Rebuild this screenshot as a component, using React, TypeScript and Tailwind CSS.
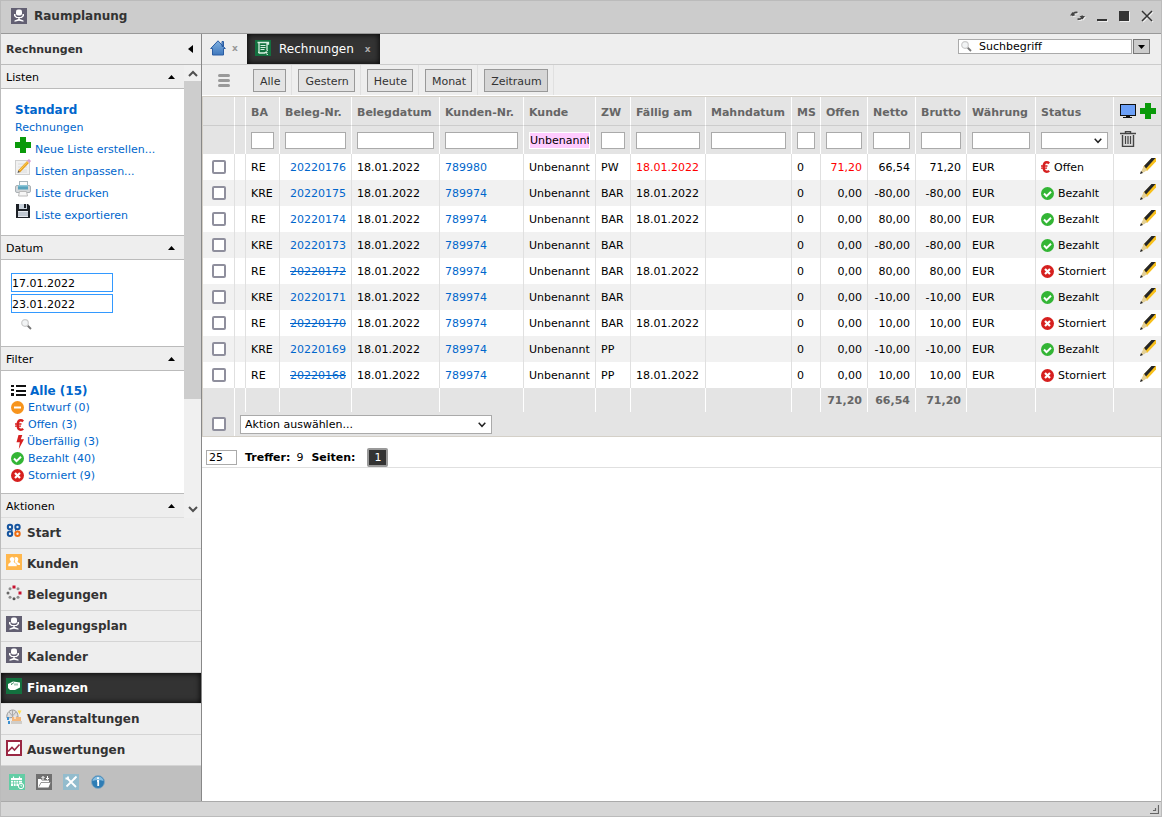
import React, { useState } from 'react';

type Status = 'offen' | 'bezahlt' | 'storniert';

interface Invoice {
  ba: string;
  nr: string;
  kunde: string;
  zw: string;
  due: string;
  open: string;
  net: string;
  gross: string;
  status: Status;
  overdue?: boolean;
}

const DATE = '18.01.2022';

const INVOICES: Invoice[] = [
  { ba: 'RE', nr: '20220176', kunde: '789980', zw: 'PW', due: DATE, open: '71,20', net: '66,54', gross: '71,20', status: 'offen', overdue: true },
  { ba: 'KRE', nr: '20220175', kunde: '789974', zw: 'BAR', due: DATE, open: '0,00', net: '-80,00', gross: '-80,00', status: 'bezahlt' },
  { ba: 'RE', nr: '20220174', kunde: '789974', zw: 'BAR', due: DATE, open: '0,00', net: '80,00', gross: '80,00', status: 'bezahlt' },
  { ba: 'KRE', nr: '20220173', kunde: '789974', zw: 'BAR', due: '', open: '0,00', net: '-80,00', gross: '-80,00', status: 'bezahlt' },
  { ba: 'RE', nr: '20220172', kunde: '789974', zw: 'BAR', due: DATE, open: '0,00', net: '80,00', gross: '80,00', status: 'storniert' },
  { ba: 'KRE', nr: '20220171', kunde: '789974', zw: 'BAR', due: '', open: '0,00', net: '-10,00', gross: '-10,00', status: 'bezahlt' },
  { ba: 'RE', nr: '20220170', kunde: '789974', zw: 'BAR', due: DATE, open: '0,00', net: '10,00', gross: '10,00', status: 'storniert' },
  { ba: 'KRE', nr: '20220169', kunde: '789974', zw: 'PP', due: '', open: '0,00', net: '-10,00', gross: '-10,00', status: 'bezahlt' },
  { ba: 'RE', nr: '20220168', kunde: '789974', zw: 'PP', due: DATE, open: '0,00', net: '10,00', gross: '10,00', status: 'storniert' },
];

const COLUMNS = [
  { label: 'BA', width: 'w-[34px]' },
  { label: 'Beleg-Nr.', width: 'w-[72px]' },
  { label: 'Belegdatum', width: 'w-[88px]' },
  { label: 'Kunden-Nr.', width: 'w-[84px]' },
  { label: 'Kunde', width: 'w-[72px]' },
  { label: 'ZW', width: 'w-[35px]' },
  { label: 'Fällig am', width: 'w-[75px]' },
  { label: 'Mahndatum', width: 'w-[86px]' },
  { label: 'MS', width: 'w-[29px]' },
  { label: 'Offen', width: 'w-[47px]' },
  { label: 'Netto', width: 'w-[48px]' },
  { label: 'Brutto', width: 'w-[51px]' },
  { label: 'Währung', width: 'w-[69px]' },
  { label: 'Status', width: 'w-[78px]' },
];

const TOTALS: Record<string, string> = { Offen: '71,20', Netto: '66,54', Brutto: '71,20' };

/* ---------- icons ---------- */

function ChairIcon() {
  return (
    <svg width="16" height="16" viewBox="0 0 16 16">
      <rect width="16" height="16" fill="#625f72" />
      <rect x="5" y="1.500" width="6" height="6" rx="2" fill="#fff" />
      <path d="M3 6h1.500v1.500L6 9h4l1.500-1.500V6H13v2l-2.200 2H5.200L3 8z" fill="#fff" />
      <path d="M7.300 9h1.400v2l3.800 1.500v1.300L8 12.800l-4.500 1V12.500L7.300 11z" fill="#fff" />
    </svg>
  );
}

function PlusIcon() {
  return (
    <svg width="16" height="16" viewBox="0 0 16 16" className="inline-block">
      <path d="M5 0h6v5h5v6h-5v5H5v-5H0V5h5z" fill="#0a9a0a" />
    </svg>
  );
}

function NoteIcon() {
  return (
    <svg width="16" height="16" viewBox="0 0 16 16" className="inline-block">
      <rect x=".5" y="1.5" width="14" height="14" fill="#f1f1f1" stroke="#cfcfcf" />
      <path d="M3 5h7M3 8h9M3 11h9M3 13h9" stroke="#dcdcdc" />
      <path d="M4 12.500 13 3" stroke="#e8a020" strokeWidth="2.600" />
      <path d="M4.500 11.500 12.500 3" stroke="#ffd45c" strokeWidth="1" />
      <path d="m12 1.500 2-1.500 2 2-1.500 2z" fill="#d9a0d0" />
      <path d="m2.500 14 .8-2.500 1.700 1.500z" fill="#555" />
    </svg>
  );
}

function PrinterIcon() {
  return (
    <svg width="16" height="16" viewBox="0 0 16 16" className="inline-block">
      <rect x="4.500" y=".5" width="8" height="5" fill="#fafafa" stroke="#a8b4bb" />
      <rect x=".5" y="4.500" width="15" height="7" rx="1.500" fill="#d5d8da" stroke="#aab0b4" />
      <rect x="3" y="4" width="10" height="4.500" fill="#58a3bd" />
      <rect x="3" y="4" width="10" height="1.500" fill="#8cc6d8" />
      <path d="M4.500 10.500h7l1 4.500h-9z" fill="#f6f6f6" stroke="#bbb" />
    </svg>
  );
}

function DiskIcon() {
  return (
    <svg width="16" height="16" viewBox="0 0 16 16" className="inline-block">
      <path d="M1 1h12l2 2v12H1z" fill="#1c2026" />
      <rect x="4" y="1" width="8" height="5" fill="#c9d2dc" />
      <rect x="9" y="1" width="2" height="4" fill="#1c2026" />
      <rect x="3" y="8" width="10" height="6" fill="#e6e9ee" />
      <path d="M3 10h10M3 12h10" stroke="#9aa6b4" />
    </svg>
  );
}

function SearchIcon() {
  return (
    <svg width="11" height="11" viewBox="0 0 11 11">
      <path d="m6.500 6.500 3.500 3.500" stroke="#777" strokeWidth="1.800" />
      <circle cx="4" cy="4" r="3.300" fill="#f2f4f5" stroke="#ccc" strokeWidth="1.200" />
    </svg>
  );
}

function ListIcon() {
  return (
    <svg width="15" height="13" viewBox="0 0 15 13" shapeRendering="crispEdges">
      <path d="M0 1h3v2H0zM0 5h3v2H0zM0 9h3v3H0zM5 1h10v2H5zM5 6h10v2H5zM5 10h10v2H5z" fill="#111" />
    </svg>
  );
}

function DraftIcon() {
  return (
    <svg width="13" height="13" viewBox="0 0 13 13">
      <circle cx="6.500" cy="6.500" r="6.500" fill="#f7941d" />
      <rect x="3" y="5.500" width="7" height="2" fill="#fff" />
    </svg>
  );
}

function EuroIcon() {
  return (
    <svg width="9" height="12" viewBox="0 0 9 12">
      <path d="M8.200 2.300C7.300 1.400 6.500 1.300 5.800 1.300 3.500 1.300 2.700 3.500 2.700 6s.8 4.700 3.100 4.700c.7 0 1.600-.1 2.400-1" fill="none" stroke="#d62020" strokeWidth="2.400" />
      <path d="M0 5h6.500M0 7.200h6" stroke="#d62020" strokeWidth="1.300" />
    </svg>
  );
}

function BoltIcon() {
  return (
    <svg width="9" height="14" viewBox="0 0 9 14">
      <path d="M3.500 0h3.800L5.800 4.200H9L3.800 14l1-6.800H1.500z" fill="#d62020" />
    </svg>
  );
}

function CheckIcon() {
  return (
    <svg width="13" height="13" viewBox="0 0 13 13">
      <circle cx="6.500" cy="6.500" r="6.500" fill="#33b535" />
      <path d="m3 6.500 2.500 2.600L10 4.700" fill="none" stroke="#fff" strokeWidth="2" />
    </svg>
  );
}

function CancelIcon() {
  return (
    <svg width="13" height="13" viewBox="0 0 13 13">
      <circle cx="6.500" cy="6.500" r="6.500" fill="#d6201f" />
      <path d="m4 4 5 5M9 4 4 9" stroke="#fff" strokeWidth="2.200" />
    </svg>
  );
}

function PencilIcon() {
  return (
    <svg width="16" height="16" viewBox="0 0 16 16" className="inline-block">
      <path d="M12 0h4v3.500L7 13l-4-4z" fill="#f8c01c" />
      <path d="M11.500 0H15.500L6 10.500 4 8z" fill="#23252a" />
      <path d="M4 8 2 11.500.5 15.500l4-1.600L7 12z" fill="#e3cf96" />
      <path d="m0 16 1-3 2 2z" fill="#222" />
    </svg>
  );
}

function MonitorIcon() {
  return (
    <svg width="16" height="15" viewBox="0 0 16 15" shapeRendering="crispEdges">
      <rect width="16" height="12" fill="#111" />
      <rect x="1" y="1" width="14" height="10" fill="#6ca0f8" />
      <path d="M6 12h4v1h2v1H3v-1h3z" fill="#111" />
    </svg>
  );
}

function TrashIcon() {
  return (
    <svg width="16" height="16" viewBox="0 0 16 16">
      <path d="M0 2.500h16M5.500 2V.5h5V2" stroke="#444" strokeWidth="1.400" fill="none" />
      <path d="M2.500 4v11.500h11V4" stroke="#444" strokeWidth="1.400" fill="#ddd" />
      <path d="M5.500 5v8M8 5v8M10.500 5v8" stroke="#444" strokeWidth="1.200" />
    </svg>
  );
}

function HomeIcon() {
  return (
    <svg width="16" height="16" viewBox="0 0 16 16">
      <defs>
        <linearGradient id="roof" x1="0" y1="0" x2="0" y2="1">
          <stop offset="0" stopColor="#7fb0e0" />
          <stop offset="1" stopColor="#3f78bd" />
        </linearGradient>
      </defs>
      <path d="M8 .8 15.300 8.500H13.500v6.500h-11V8.500H.7zM12 1.500h1.500v5H12z" fill="url(#roof)" stroke="#2b5da3" />
    </svg>
  );
}

function InvoiceIcon() {
  return (
    <svg width="16" height="16" viewBox="0 0 16 16">
      <rect width="16" height="16" fill="#13713f" />
      <path d="M2.500 2.500h11v1.500h-1.500v6M4 3v9.500h-1M4 13h6" fill="none" stroke="#d8eee0" strokeWidth="1.300" />
      <path d="M5.500 5.500h5M5.500 7.500h5M5.500 9.500h4" stroke="#d8eee0" />
      <path d="M13 10.500c-3 0-3 4 0 4M9.500 12.500h3" stroke="#d8eee0" fill="none" />
    </svg>
  );
}

function StartIcon() {
  return (
    <svg width="16" height="16" viewBox="0 0 16 16" fill="none" strokeWidth="2">
      <circle cx="4" cy="4" r="2.200" stroke="#15549f" />
      <circle cx="11.500" cy="4" r="2.200" stroke="#15549f" />
      <circle cx="4" cy="10.800" r="2.200" stroke="#15549f" />
      <circle cx="11.500" cy="10.800" r="2.200" stroke="#ee6c10" />
      <path d="M5.500 7h.500M9 7h1M5.800 8.500v-2" stroke="#15549f" strokeWidth="1.500" />
    </svg>
  );
}

function PeopleIcon() {
  return (
    <svg width="16" height="16" viewBox="0 0 16 16">
      <rect width="16" height="16" fill="#ffb74d" />
      <path d="M8.500 3.500C10 2.200 12.500 3 12.300 5.500L11.500 8l2.500 1.500V11H9z" fill="#fff" />
      <path d="M3.500 5.500C3.500 1.800 8.800 1.800 8.800 5.500L8 8l3 2v2.500H2V10l2.500-2z" fill="#fff" stroke="#ffb74d" strokeWidth=".6" />
    </svg>
  );
}

function RingIcon() {
  return (
    <svg width="16" height="16" viewBox="0 0 16 16" fill="#8d8d8d">
      <rect x="6.500" y="0.500" width="3" height="3" fill="#c8102e" />
      <rect x="12.500" y="6.500" width="3" height="3" fill="#c8102e" />
      <circle cx="12" cy="3.800" r="1.500" />
      <circle cx="12" cy="12.200" r="1.500" />
      <circle cx="8" cy="13.800" r="1.500" fill="#555" />
      <circle cx="4" cy="12.200" r="1.500" />
      <circle cx="2" cy="8" r="1.500" fill="#666" />
      <circle cx="4" cy="3.800" r="1.500" />
    </svg>
  );
}

function MoneyIcon() {
  return (
    <svg width="16" height="16" viewBox="0 0 16 16">
      <rect width="16" height="16" fill="#13713f" />
      <path d="m2 6 5-2.500 7 1v5L9 12H4L2 10z" fill="#fff" />
      <path d="M5.500 5.500v1.500M9 5.500v2M6 6l2-1.500M11 5.500v2" stroke="#4f9470" strokeWidth="1" />
    </svg>
  );
}

function EventIcon() {
  return (
    <svg width="16" height="16" viewBox="0 0 16 16">
      <path d="M1 9c-1-4 2-8 5.500-8S12 4 12 8z" fill="#dedede" stroke="#999" />
      <path d="M6.500 1v7M3 3l3.500 4L10 3" stroke="#aaa" fill="none" />
      <path d="M11.500 1.500H15.500l-2 4z" fill="#ffe052" />
      <path d="M6 8h9v4H6z" fill="#f3b77c" />
      <path d="M5 12h11v3H5z" fill="#d0cdc8" />
      <path d="M1 8h2v3H1zM2 12h2v3H2z" fill="#3b8fd0" />
      <path d="M9 7v3" stroke="#fff" />
    </svg>
  );
}

function ChartIcon() {
  return (
    <svg width="16" height="16" viewBox="0 0 16 16">
      <rect x="1" y="1" width="14" height="14" fill="#fff" stroke="#9b2743" strokeWidth="2" />
      <path d="M2 11.500 6 7.500l2.500 2.500L13.500 4.500" fill="none" stroke="#9b2743" strokeWidth="1.600" />
    </svg>
  );
}

function CalendarIcon() {
  return (
    <svg width="16" height="16" viewBox="0 0 16 16">
      <rect width="16" height="16" fill="#63cda5" />
      <path d="M2 4h11v8H2z" fill="#fff" />
      <path d="M2 6.500h11M4.500 6v6M7 6v6M9.500 6v6M2 9h11" stroke="#63cda5" strokeWidth=".8" />
      <path d="M4.500 2.500v2M10.500 2.500v2" stroke="#fff" strokeWidth="1.200" />
      <circle cx="12" cy="12" r="2.700" fill="#63cda5" stroke="#fff" />
      <path d="M12 10.500V12h1.300" stroke="#fff" strokeWidth=".8" fill="none" />
    </svg>
  );
}

function FolderIcon() {
  return (
    <svg width="16" height="16" viewBox="0 0 16 16">
      <rect width="16" height="16" fill="#707070" />
      <path d="M2 5h3l1 1.500h7V8l1.500.5L12.500 13.500H2z" fill="#fff" />
      <path d="M3 12.500 5 8.500h9" stroke="#707070" strokeWidth=".7" fill="none" />
      <path d="M7 6V2.500M5.500 4 7 2.500 8.500 4M11.500 2v3.500M10 4l1.500 1.500L13 4" stroke="#fff" fill="none" />
    </svg>
  );
}

function ToolsIcon() {
  return (
    <svg width="16" height="16" viewBox="0 0 16 16">
      <rect width="16" height="16" fill="#93bccd" />
      <path d="m4.500 4.500 8.500 8.500M12 4 3.500 12.500" stroke="#fff" strokeWidth="1.800" />
      <path d="M2.500 4.500h2.500V2.500M13.500 2.500 11 5" stroke="#fff" strokeWidth="1.800" fill="none" />
    </svg>
  );
}

function InfoIcon() {
  return (
    <svg width="16" height="16" viewBox="0 0 16 16">
      <circle cx="8" cy="8" r="6.500" fill="#2f7db5" stroke="#88a8bf" strokeWidth=".8" />
      <path d="M2.500 7a5.600 5.600 0 0 1 11 0C10 5.500 6 5.500 2.500 7z" fill="#86bde0" />
      <path d="M8 3.200v1.800M7 7h1.200v5" stroke="#fff" strokeWidth="1.800" fill="none" />
    </svg>
  );
}

function ChevronDown({ className }: { className: string }) {
  return (
    <svg width="8" height="6" viewBox="0 0 8 6" className={className}>
      <path d="m.7 .8 3.300 3.500L7.300 .8" fill="none" stroke="#222" strokeWidth="1.500" />
    </svg>
  );
}

/* ---------- parts ---------- */

function Checkbox({ label }: { label: string }) {
  return (
    <input
      type="checkbox"
      aria-label={label}
      className="block size-3.5 appearance-none rounded-xs border-2 border-[#8f8f9d] bg-white checked:bg-[#0066cc]"
    />
  );
}

function TitleBar() {
  return (
    <header className="flex h-[33px] shrink-0 items-center border-b border-[#999] bg-[#ccc] pr-2 pb-0.5 pl-2.5">
      <ChairIcon />
      <h1 className="ml-[7px] flex-1 text-[12px] font-bold text-[#333]">Raumplanung</h1>
      <div className="flex items-center gap-3 text-[#333]">
        <button aria-label="Neu laden">
          <svg width="15" height="12" viewBox="0 0 15 12" className="drop-shadow-[1px_1px_0_#eee]">
            <path d="M3 6C2.500 3.500 4 2 7.500 2.500M12 5.500c.5 2.500-1 4-4.500 3.500" fill="none" stroke="#444" strokeWidth="1.600" />
            <path d="M0 5.500h5.500L2.500 2zM15 6H9.500l3 3.500z" fill="#444" />
          </svg>
        </button>
        <button aria-label="Minimieren">
          <svg width="10" height="10" viewBox="0 0 10 10" className="drop-shadow-[1px_1px_0_#eee]">
            <path d="M0 8h10v2H0z" fill="#333" />
          </svg>
        </button>
        <button aria-label="Maximieren">
          <svg width="10" height="10" viewBox="0 0 10 10" className="drop-shadow-[1px_1px_0_#eee]">
            <path d="M0 0h10v10H0z" fill="#333" />
          </svg>
        </button>
        <button aria-label="Schließen">
          <svg width="12" height="12" viewBox="0 0 12 12" className="drop-shadow-[1px_1px_0_#eee]">
            <path d="m1 1 10 10M11 1 1 11" stroke="#333" strokeWidth="1.500" />
          </svg>
        </button>
      </div>
    </header>
  );
}

function Section({ title, children }: { title: string; children?: React.ReactNode }) {
  const [open, setOpen] = useState(true);
  return (
    <section>
      <button
        onClick={() => setOpen(!open)}
        className="flex h-6 w-full items-center justify-between border-b border-[#bbb] bg-[#eee] pr-[9px] pl-[5px]"
      >
        <span className="pt-0.5">{title}</span>
        <svg width="7" height="4" viewBox="0 0 7 4">
          <path d="M0 4h7L3.500 0z" fill="#000" />
        </svg>
      </button>
      {open && children && <div className="border-b border-[#bbb] bg-white">{children}</div>}
    </section>
  );
}

const LIST_ACTIONS = [
  { icon: <PlusIcon />, label: 'Neue Liste erstellen...' },
  { icon: <NoteIcon />, label: 'Listen anpassen...' },
  { icon: <PrinterIcon />, label: 'Liste drucken' },
  { icon: <DiskIcon />, label: 'Liste exportieren' },
];

const FILTERS = [
  { icon: <DraftIcon />, label: 'Entwurf (0)', pad: 'gap-1' },
  { icon: <EuroIcon />, label: 'Offen (3)', pad: 'gap-1 pl-1' },
  { icon: <BoltIcon />, label: 'Überfällig (3)', pad: 'gap-[3px] pl-1' },
  { icon: <CheckIcon />, label: 'Bezahlt (40)', pad: 'gap-1' },
  { icon: <CancelIcon />, label: 'Storniert (9)', pad: 'gap-1' },
];

const NAV = [
  { icon: <StartIcon />, label: 'Start' },
  { icon: <PeopleIcon />, label: 'Kunden' },
  { icon: <RingIcon />, label: 'Belegungen' },
  { icon: <ChairIcon />, label: 'Belegungsplan' },
  { icon: <ChairIcon />, label: 'Kalender' },
  { icon: <MoneyIcon />, label: 'Finanzen' },
  { icon: <EventIcon />, label: 'Veranstaltungen' },
  { icon: <ChartIcon />, label: 'Auswertungen' },
];

const DATE_INPUT = 'block h-[19px] w-[102px] border border-[#3399ff] bg-white pt-px';

function Sidebar() {
  return (
    <aside className="flex w-[201px] shrink-0 flex-col border-r border-[#888] bg-[#eee]">
      <div className="flex h-[31px] shrink-0 items-center justify-between border-b border-[#bbb] pr-2 pl-[5px]">
        <h2 className="pt-0.5 font-bold text-[#333]">Rechnungen</h2>
        <button aria-label="Einklappen">
          <svg width="5" height="8" viewBox="0 0 5 8">
            <path d="M5 0v8L0 4z" fill="#000" />
          </svg>
        </button>
      </div>

      <div className="flex min-h-0 flex-1">
        <div className="min-w-0 flex-1 overflow-hidden border-b border-[#ddd]">
          <Section title="Listen">
            <div className="h-[146px] pt-[13px] pl-3.5 text-[#0066cc]">
              <a href="#" className="block text-[12px] leading-[17px] font-bold">Standard</a>
              <a href="#" className="block leading-[17px]">Rechnungen</a>
              {LIST_ACTIONS.map((a) => (
                <a key={a.label} href="#" className="flex h-[22px] items-center gap-1">
                  <span className="pb-1">{a.icon}</span>
                  <span className="pt-1.5">{a.label}</span>
                </a>
              ))}
            </div>
          </Section>
          <Section title="Datum">
            <div className="flex h-[86px] flex-col items-start gap-0.5 pt-[13px] pl-2.5">
              <input aria-label="Von" defaultValue="17.01.2022" className={DATE_INPUT} />
              <input aria-label="Bis" defaultValue="23.01.2022" className={DATE_INPUT} />
              <button aria-label="Suchen" className="mt-1 ml-2.5">
                <SearchIcon />
              </button>
            </div>
          </Section>
          <Section title="Filter">
            <div className="h-[122px] pt-[11px] pl-2.5 text-[#0066cc]">
              <a href="#" className="flex h-[17px] items-center gap-1 text-[12px] font-bold">
                <ListIcon />
                Alle (15)
              </a>
              {FILTERS.map((f) => (
                <a key={f.label} href="#" className={`flex h-[17px] items-center ${f.pad}`}>
                  {f.icon}
                  {f.label}
                </a>
              ))}
            </div>
          </Section>
          <Section title="Aktionen" />
        </div>
        {/* scrollbar */}
        <div className="flex w-[17px] shrink-0 flex-col items-center bg-[#f0f0f0]">
          <button aria-label="Nach oben" className="flex h-4 w-full items-center justify-center">
            <svg width="10" height="7" viewBox="0 0 10 7">
              <path d="m1 6 4-4 4 4" fill="none" stroke="#505050" strokeWidth="2" />
            </svg>
          </button>
          <div className="h-[318px] w-full bg-[#cdcdcd]" />
          <div className="flex-1" />
          <button aria-label="Nach unten" className="flex h-[17px] w-full items-center justify-center">
            <svg width="10" height="7" viewBox="0 0 10 7">
              <path d="m1 1 4 4 4-4" fill="none" stroke="#505050" strokeWidth="2" />
            </svg>
          </button>
        </div>
      </div>

      <nav>
        {NAV.map((n) => {
          const active = n.label === 'Finanzen';
          return (
            <a
              key={n.label}
              href="#"
              className={`flex h-[31px] items-center gap-[5px] border-b pl-[5px] text-[12px] font-bold ${
                active
                  ? 'border-[#ddd] bg-[#333] text-white shadow-[inset_0_0_6px_#000]'
                  : 'border-[#d4d4d4] text-[#333]'
              }`}
            >
              <span className="pb-1">{n.icon}</span>
              {n.label}
            </a>
          );
        })}
      </nav>

      <div className="flex h-[35px] shrink-0 items-center gap-[11px] bg-[#bfbfbf] pb-1 pl-2">
        <button aria-label="Termine"><CalendarIcon /></button>
        <button aria-label="Import und Export"><FolderIcon /></button>
        <button aria-label="Einstellungen"><ToolsIcon /></button>
        <button aria-label="Information"><InfoIcon /></button>
      </div>
    </aside>
  );
}

function Tabs() {
  return (
    <div className="flex h-[31px] items-stretch border-b border-[#ccc] bg-[#eee]">
      <div className="flex w-[45px] items-center gap-1.5 pb-0.5 pl-2">
        <a href="#" aria-label="Startseite"><HomeIcon /></a>
        <button aria-label="Tab schließen" className="text-[9px] font-bold text-[#999]">x</button>
      </div>
      <div className="flex items-center gap-2 bg-[#333] pr-[9px] pl-2 text-white shadow-[inset_0_0_6px_#000]">
        <span className="pb-0.5"><InvoiceIcon /></span>
        <span className="text-[12px]">Rechnungen</span>
        <button aria-label="Tab schließen" className="ml-[3px] text-[9px] font-bold text-[#aaa]">x</button>
      </div>
      <div className="flex flex-1 items-start justify-end gap-px pt-[5px] pr-[11px]">
        <label className="flex h-[15px] w-[174px] items-center border border-[#aaa] bg-white pl-0.5">
          <SearchIcon />
          <input aria-label="Suche" defaultValue="Suchbegriff" className="ml-[7px] h-[13px] min-w-0 flex-1 pt-px outline-none" />
        </label>
        <button aria-label="Suchoptionen" className="flex h-[15px] w-[17px] items-center justify-center border border-[#777] bg-[#ccc]">
          <svg width="7" height="4" viewBox="0 0 7 4">
            <path d="M0 0h7L3.500 4z" fill="#000" />
          </svg>
        </button>
      </div>
    </div>
  );
}

function Toolbar() {
  const [range, setRange] = useState('Zeitraum');
  return (
    <div className="flex h-[30px] items-center bg-[#eee]">
      <button aria-label="Menü" className="mr-[17px] ml-4 flex flex-col gap-0.5">
        <span className="block h-[3px] w-3 rounded-xs bg-[#999]" />
        <span className="block h-[3px] w-3 rounded-xs bg-[#999]" />
        <span className="block h-[3px] w-3 rounded-xs bg-[#999]" />
      </button>
      {['Alle', 'Gestern', 'Heute', 'Monat', 'Zeitraum'].map((r) => (
        <div key={r} className="flex h-full items-center border-r border-[#e0e0e0] pt-px pr-[5px] pl-1.5">
          <button
            onClick={() => setRange(r)}
            className={`h-[23px] border border-[#999] pt-0.5 pr-[5px] pl-1.5 text-[#333] ${r === range ? 'bg-[#d6d6d6]' : 'bg-[#e4e4e4]'}`}
          >
            {r}
          </button>
        </div>
      ))}
    </div>
  );
}

const HEAD = 'border-r border-white bg-[#e4e4e4] px-[5px] text-left';
const CELL = 'border-r border-[#e0e0e0] px-[5px] pt-0.5 whitespace-nowrap';

function StatusCell({ status }: { status: Status }) {
  return (
    <span className="flex items-center gap-1">
      {status === 'offen' && <><span className="pb-0.5"><EuroIcon /></span>Offen</>}
      {status === 'bezahlt' && <><span className="pb-0.5"><CheckIcon /></span>Bezahlt</>}
      {status === 'storniert' && <><span className="pb-0.5"><CancelIcon /></span>Storniert</>}
    </span>
  );
}

function ColumnFilter({ label }: { label: string }) {
  if (label === 'Status') {
    return (
      <div className="relative">
        <select aria-label="Filter Status" className="block h-[17px] w-full appearance-none border border-[#aaa] bg-white">
          <option></option>
          <option>Offen</option>
          <option>Bezahlt</option>
          <option>Storniert</option>
        </select>
        <ChevronDown className="pointer-events-none absolute top-1.5 right-1.5" />
      </div>
    );
  }
  const filled = label === 'Kunde';
  return (
    <input
      aria-label={`Filter ${label}`}
      defaultValue={filled ? 'Unbenannt' : ''}
      className={`block h-[17px] w-full border ${filled ? 'border-white bg-[#ffccff]' : 'border-[#aaa] bg-white'}`}
    />
  );
}

function InvoiceTable() {
  return (
    <table className="w-full table-fixed border-separate border-spacing-0 border-y border-l border-[#d4d0c8]">
      <colgroup>
        <col className="w-8" />
        <col className="w-[11px]" />
        {COLUMNS.map((c) => (
          <col key={c.label} className={c.width} />
        ))}
        <col />
      </colgroup>
      <thead>
        <tr className="h-[29px] text-[#666] [&>*]:border-b [&>*]:border-b-[#ccc]">
          <td className={HEAD} />
          <td className={HEAD} />
          {COLUMNS.map((c) => (
            <th key={c.label} className={`${HEAD} pt-[3px] whitespace-nowrap`}>{c.label}</th>
          ))}
          <td className="bg-[#e4e4e4] pr-[5px] pl-1.5">
            <span className="flex items-center justify-between">
              <button aria-label="Ansicht"><MonitorIcon /></button>
              <button aria-label="Neue Rechnung"><PlusIcon /></button>
            </span>
          </td>
        </tr>
        <tr className="h-7">
          <td className={HEAD} />
          <td className={HEAD} />
          {COLUMNS.map((c) => (
            <td key={c.label} className={HEAD}>
              <ColumnFilter label={c.label} />
            </td>
          ))}
          <td className="bg-[#e4e4e4] pb-0.5 pl-1.5">
            <button aria-label="Filter löschen" className="block"><TrashIcon /></button>
          </td>
        </tr>
      </thead>
      <tbody>
        {INVOICES.map((inv) => (
          <tr key={inv.nr} className="h-[26px] bg-white even:bg-[#f1f1f1]">
            <td className="border-r border-[#e0e0e0] pl-[9px]"><Checkbox label={`Beleg ${inv.nr}`} /></td>
            <td className="border-r border-[#e0e0e0]" />
            <td className={CELL}>{inv.ba}</td>
            <td className={`${CELL} text-right`}>
              <a href="#" className={inv.status === 'storniert' ? 'text-[#0066cc] line-through' : 'text-[#0066cc]'}>{inv.nr}</a>
            </td>
            <td className={CELL}>{DATE}</td>
            <td className={CELL}><a href="#" className="text-[#0066cc]">{inv.kunde}</a></td>
            <td className={CELL}>Unbenannt</td>
            <td className={CELL}>{inv.zw}</td>
            <td className={`${CELL} ${inv.overdue ? 'text-[#f00]' : ''}`}>{inv.due}</td>
            <td className={CELL} />
            <td className={CELL}>0</td>
            <td className={`${CELL} text-right ${inv.overdue ? 'text-[#f00]' : ''}`}>{inv.open}</td>
            <td className={`${CELL} text-right`}>{inv.net}</td>
            <td className={`${CELL} text-right`}>{inv.gross}</td>
            <td className={CELL}>EUR</td>
            <td className={CELL}><StatusCell status={inv.status} /></td>
            <td className="px-[5px] pb-0.5">
              <button aria-label={`Beleg ${inv.nr} bearbeiten`} className="ml-auto block"><PencilIcon /></button>
            </td>
          </tr>
        ))}
      </tbody>
      <tfoot>
        <tr className="h-6 font-bold text-[#666]">
          <td className={HEAD} />
          <td className={HEAD} />
          {COLUMNS.map((c) => (
            <td key={c.label} className="border-r border-white bg-[#e4e4e4] px-[5px] pt-0.5 text-right">{TOTALS[c.label]}</td>
          ))}
          <td className="bg-[#e4e4e4]" />
        </tr>
        <tr className="h-6">
          <td className="border-r border-white bg-[#e4e4e4] pl-[9px]"><Checkbox label="Alle auswählen" /></td>
          <td colSpan={16} className="bg-[#e4e4e4] pl-[5px]">
            <div className="relative w-[252px]">
              <select aria-label="Aktion" className="block h-[19px] w-full appearance-none border border-[#aaa] bg-white pt-px pl-1">
                <option>Aktion auswählen...</option>
              </select>
              <ChevronDown className="pointer-events-none absolute top-[7px] right-1.5" />
            </div>
          </td>
        </tr>
      </tfoot>
    </table>
  );
}

function Pager() {
  return (
    <div className="flex h-[31px] items-end border-b border-[#e0e0e0] pl-1">
      <input aria-label="Zeilen pro Seite" defaultValue="25" className="mb-0.5 h-[15px] w-[31px] border border-[#aaa] pl-0.5" />
      <p className="mb-0.5 ml-2 flex gap-1.5">
        <b>Treffer:</b> 9
      </p>
      <b className="mb-0.5 ml-2">Seiten:</b>
      <button className="ml-3 h-[19px] w-[21px] rounded-xs border-2 border-[#999] bg-[#333] text-white">1</button>
    </div>
  );
}

function App() {
  return (
    <div className="flex h-screen flex-col border border-[#bbb] bg-white font-['DejaVu_Sans',Verdana,sans-serif] text-[11px] leading-[14px] text-black">
      <TitleBar />
      <div className="flex min-h-0 flex-1">
        <Sidebar />
        <main className="min-w-0 flex-1 overflow-hidden">
          <Tabs />
          <Toolbar />
          <div className="border-t border-white">
            <InvoiceTable />
          </div>
          <Pager />
        </main>
      </div>
      <footer className="flex h-[15px] shrink-0 items-end justify-end border-t border-[#aaa] bg-[#d6d6d6] pr-0.5 pb-0.5">
        <svg width="9" height="9" viewBox="0 0 9 9">
          <path d="M8.500 0v8.500H0M5.500 3v2.500H3" fill="none" stroke="#666" strokeWidth="1.200" />
        </svg>
      </footer>
    </div>
  );
}

export default App;
